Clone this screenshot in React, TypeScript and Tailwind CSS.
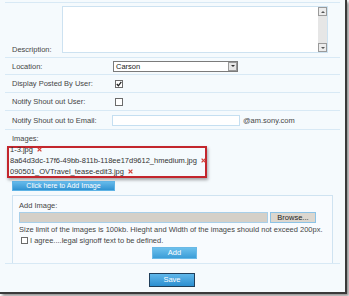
function Check({ checked }: { checked?: boolean }) {
  return (
    <div className="w-[8px] h-[8px] border border-[#6b6b6b] bg-white flex items-center justify-center">
      {checked ? (
        <svg width="6" height="6" viewBox="0 0 6 6">
          <path d="M0.8 3 L2.4 4.8 L5.3 0.8" stroke="#222" strokeWidth="1.3" fill="none" />
        </svg>
      ) : null}
    </div>
  );
}

function RedX() {
  return (
    <svg width="5" height="5" viewBox="0 0 5 5" className="ml-[4px] inline-block shrink-0">
      <path d="M0.6 0.6 L4.4 4.4 M4.4 0.6 L0.6 4.4" stroke="#d2443c" strokeWidth="1.3" />
    </svg>
  );
}

function Row({ label, labelWidth, children }: { label: string; labelWidth: string; children?: React.ReactNode }) {
  return (
    <div className="flex items-center border-t border-[#d8e9f5] h-full">
      <div className={`${labelWidth} pl-[7px]`}>{label}</div>
      {children}
    </div>
  );
}

export default function App() {
  return (
    <div className="w-[349px] h-[296px] bg-white overflow-hidden font-['Liberation_Sans',Arial,sans-serif] text-[7.5px] leading-[9px] text-[#464646]">
      <div className="w-[347px] h-[294px] bg-[#f5fafd] border-r-2 border-b-2 border-[#3a3a3a] shadow-[2px_2px_3px_rgba(0,0,0,0.45)] pt-[2px] pl-[5px]">
        <div className="w-[335px]">
          {/* description */}
          <div className="flex border-t border-[#d8e9f5] h-[55px]">
            <div className="w-[57px] pl-[7px] flex items-end pb-[3px]">Description:</div>
            <div className="mt-[3px] h-[47px] w-[266px] bg-white border border-[#cde2f1] flex justify-end">
              <div className="w-[9px] h-full bg-[#e6e6e6] flex flex-col justify-between">
                <div className="h-[9px] bg-[#ececec] border border-[#9a9a9a] flex items-center justify-center">
                  <div className="w-0 h-0 border-x-[2px] border-x-transparent border-b-[2px] border-b-[#555]" />
                </div>
                <div className="h-[9px] bg-[#ececec] border border-[#9a9a9a] flex items-center justify-center">
                  <div className="w-0 h-0 border-x-[2px] border-x-transparent border-t-[2px] border-t-[#555]" />
                </div>
              </div>
            </div>
          </div>

          <div className="h-[17px]">
            <Row label="Location:" labelWidth="w-[108px]">
              <div className="h-[11px] w-[125px] border border-[#7b7b7b] bg-white flex items-center justify-between">
                <span className="pl-[2px] text-[#222]">Carson</span>
                <div className="w-[9px] h-[9px] bg-[#e6e6e6] border border-[#999] flex items-center justify-center">
                  <div className="w-0 h-0 border-x-[2px] border-x-transparent border-t-[2px] border-t-[#333]" />
                </div>
              </div>
            </Row>
          </div>

          <div className="h-[18px]">
            <Row label="Display Posted By User:" labelWidth="w-[110px]">
              <Check checked />
            </Row>
          </div>

          <div className="h-[18px]">
            <Row label="Notify Shout out User:" labelWidth="w-[110px]">
              <Check />
            </Row>
          </div>

          <div className="h-[19px]">
            <Row label="Notify Shout out to Email:" labelWidth="w-[107px]">
              <div className="h-[11px] w-[128px] border border-[#c5dff1] bg-white" />
              <span className="ml-[3px]">@am.sony.com</span>
            </Row>
          </div>

          {/* images */}
          <div className="h-[134px] border-t border-[#d8e9f5] flex flex-col">
            <div className="pl-[7px] mt-[4px]">Images:</div>
            <div className="ml-[2px] mt-[3px] w-[200px] h-[32px] border-2 border-[#c3262d] shadow-[1px_2px_3px_rgba(0,0,0,0.35)] pl-[1px]">
              <div className="-mt-[4px] leading-[11px] text-[#333]">
                <div className="flex items-center">1-3.jpg<RedX /></div>
                <div className="flex items-center whitespace-nowrap">8a64d3dc-17f6-49bb-811b-118ee17d9612_hmedium.jpg<RedX /></div>
                <div className="flex items-center">090501_OVTravel_tease-edit3.jpg<RedX /></div>
              </div>
            </div>
            <div className="ml-[7px] mt-[3px] w-[103px] h-[10px] bg-gradient-to-b from-[#63b9ea] to-[#2f93d2] border border-[#5fb3e5] text-white text-[7px] leading-[8px] text-center">
              Click here to Add Image
            </div>
            <div className="ml-[7px] mt-[4px] w-[321px] flex-1 border-x border-t border-[#cfe3f1] bg-[#f8fbfe] pl-[6px]">
              <div className="mt-[5px]">Add Image:</div>
              <div className="mt-[2px] flex h-[11px]">
                <div className="w-[249px] h-full bg-[#d5d0c8] border border-[#a8cfe9]" />
                <div className="ml-[2px] w-[46px] h-full bg-[#dcd7cf] border border-[#8cc3e6] text-center leading-[9px] text-[#222]">
                  Browse...
                </div>
              </div>
              <div className="mt-[2px] whitespace-nowrap">
                Size limit of the images is 100kb. Hieght and Width of the images should not exceed 200px.
              </div>
              <div className="mt-[2px] flex items-center">
                <div className="ml-[2px] w-[7px] h-[7px] border border-[#6b6b6b] bg-white" />
                <span className="ml-[2px]">I agree....legal signoff text to be defined.</span>
              </div>
              <div className="mt-[2px] ml-[133px] w-[45px] h-[12px] bg-gradient-to-b from-[#6cc0ec] to-[#3a9dd8] border border-[#6ab9e6] text-white text-center leading-[10px]">
                Add
              </div>
            </div>
          </div>

          {/* save */}
          <div className="h-[29px] border-t border-[#d8e9f5]">
            <div className="ml-[144px] mt-[9px] w-[46px] h-[14px] border border-[#1f3e5a] bg-gradient-to-b from-[#5fb7ea] to-[#2b8fd0] text-white text-center leading-[12px]">
              Save
            </div>
          </div>
        </div>
      </div>
    </div>
  );
}
